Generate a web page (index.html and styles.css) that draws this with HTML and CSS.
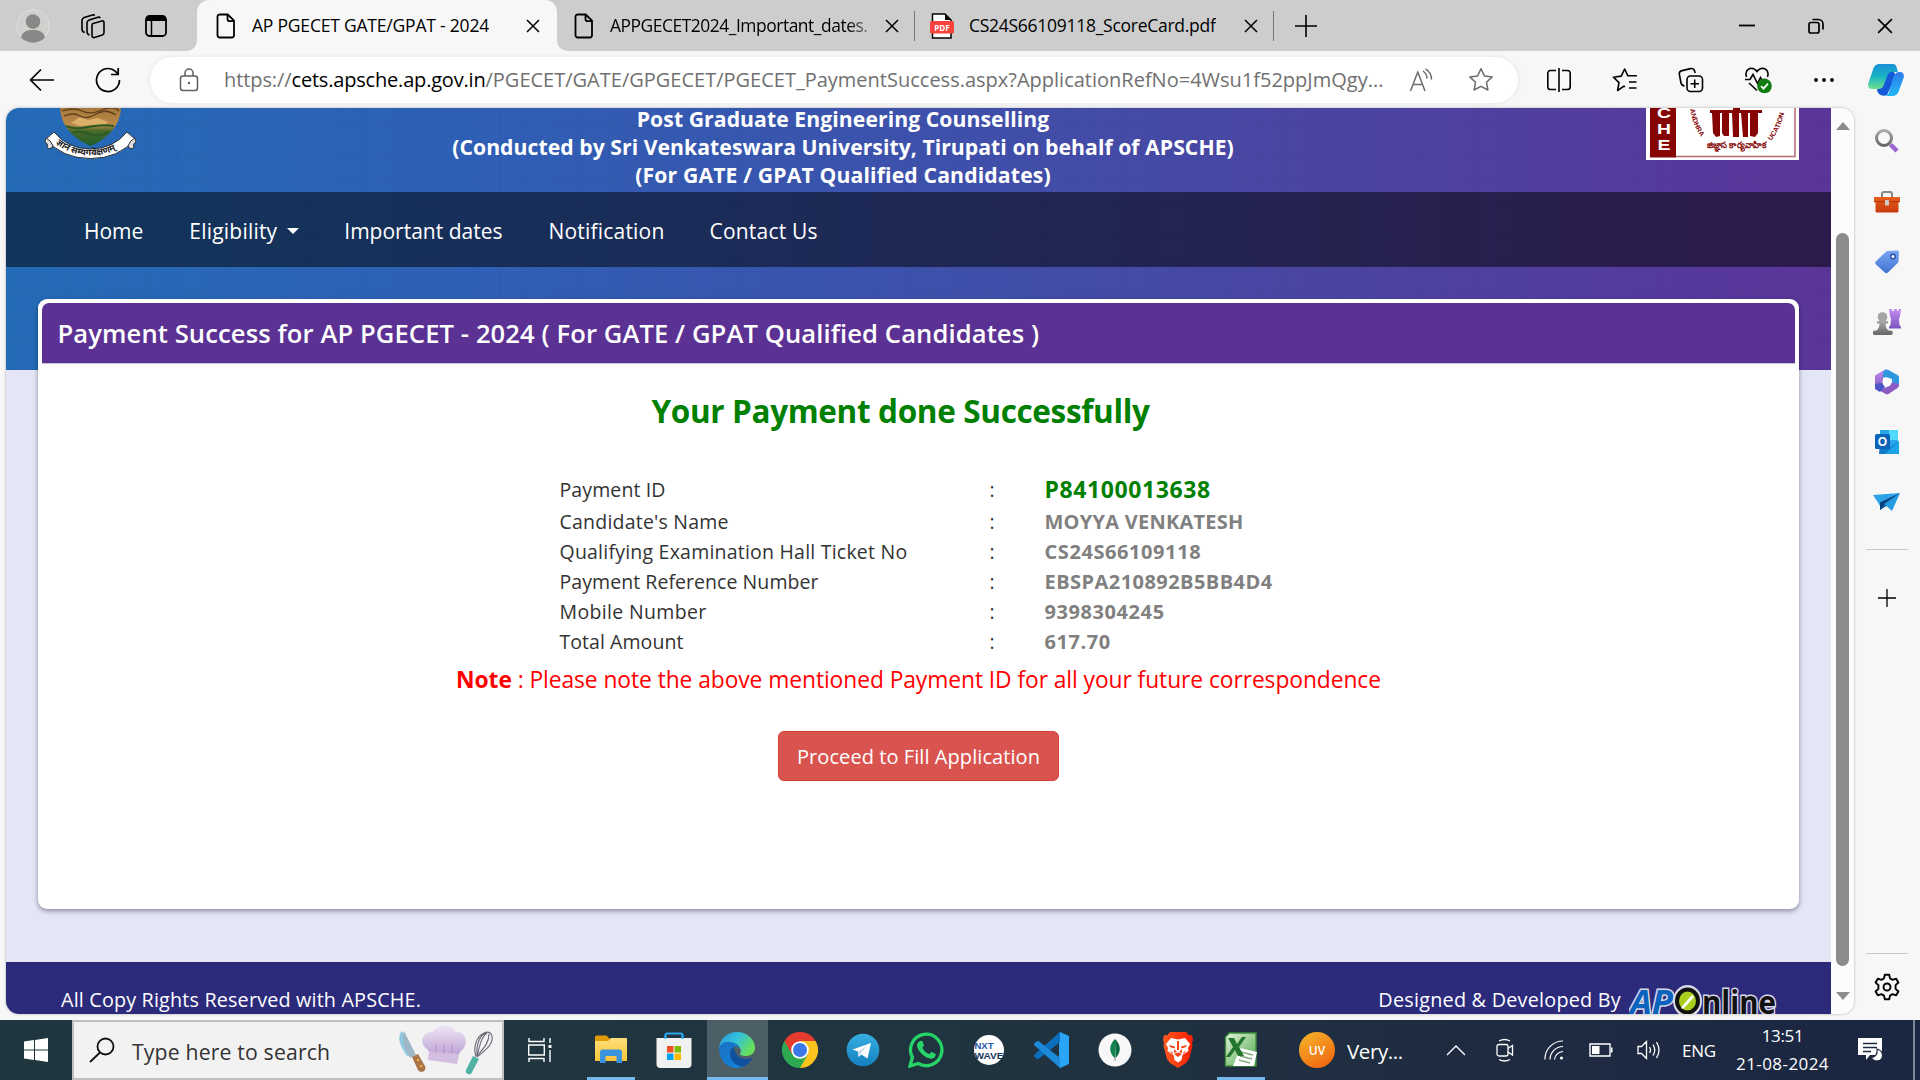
FILE: index.html
```html
<!DOCTYPE html>
<html lang="en">
<head>
<meta charset="utf-8">
<title>AP PGECET GATE/GPAT - 2024</title>
<link rel="stylesheet" href="styles.css">
</head>
<body>
<svg class="defs" width="0" height="0">
  <defs>
    <symbol id="page" viewBox="0 0 20 26"><path d="M3.5 1.5h8.2l6.3 6.2v14.6a2.2 2.2 0 0 1-2.2 2.2H3.700a2.200 2.200 0 0 1-2.200-2.200V3.700a2.200 2.200 0 0 1 2.200-2.200zM11.500 1.800V6a2.200 2.200 0 0 0 2.200 2.200h4" fill="none" stroke="#000" stroke-width="1.8"/></symbol>
    <symbol id="x" viewBox="0 0 14 14"><path d="M1 1l12 12M13 1L1 13" fill="none" stroke="#000" stroke-width="1.5"/></symbol>
    <symbol id="plus" viewBox="0 0 22 22"><path d="M11 0v22M0 11h22" fill="none" stroke="#000" stroke-width="1.6"/></symbol>
    <linearGradient id="cp1" x1="0" y1="0" x2="0" y2="1"><stop offset="0" stop-color="#1b8fd8"/><stop offset=".5" stop-color="#19b5c4"/><stop offset="1" stop-color="#6fe08c"/></linearGradient>
    <linearGradient id="cp2" x1="0" y1="0" x2="0" y2="1"><stop offset="0" stop-color="#2f7de9"/><stop offset="1" stop-color="#1fb6f5"/></linearGradient>
    <linearGradient id="pur" x1="0" y1="0" x2="0" y2="1"><stop offset="0" stop-color="#c58df0"/><stop offset="1" stop-color="#7a55c0"/></linearGradient>
    <linearGradient id="gry" x1="0" y1="0" x2="0" y2="1"><stop offset="0" stop-color="#a9a9a9"/><stop offset="1" stop-color="#666"/></linearGradient>
    <linearGradient id="org" x1="0" y1="0" x2="0" y2="1"><stop offset="0" stop-color="#e8601c"/><stop offset="1" stop-color="#c63a0c"/></linearGradient>
    <linearGradient id="blu" x1="0" y1="0" x2="0" y2="1"><stop offset="0" stop-color="#79a6f3"/><stop offset="1" stop-color="#4273d3"/></linearGradient>
    <linearGradient id="ed1" x1="0" y1="0" x2="1" y2=".5"><stop offset="0" stop-color="#2593dc"/><stop offset=".5" stop-color="#33c2dd"/><stop offset="1" stop-color="#66e05a"/></linearGradient>
    <linearGradient id="ed2" x1="0" y1="0" x2="1" y2="1"><stop offset="0" stop-color="#1c6fc4"/><stop offset="1" stop-color="#0f86dc"/></linearGradient>
    <linearGradient id="tg" x1="0" y1="0" x2="0" y2="1"><stop offset="0" stop-color="#37aee2"/><stop offset="1" stop-color="#1280c0"/></linearGradient>
    <linearGradient id="br" x1="0" y1="0" x2="1" y2="0"><stop offset="0" stop-color="#ff5a20"/><stop offset="1" stop-color="#fa1e05"/></linearGradient>
    <linearGradient id="fold" x1="0" y1="0" x2="0" y2="1"><stop offset="0" stop-color="#ffe07a"/><stop offset="1" stop-color="#f7c33a"/></linearGradient>
    <linearGradient id="xl" x1="0" y1="0" x2="1" y2="1"><stop offset="0" stop-color="#e4f3dc"/><stop offset="1" stop-color="#4fa84c"/></linearGradient>
    <linearGradient id="hat" x1="0" y1="0" x2="0" y2="1"><stop offset="0" stop-color="#efe7f6"/><stop offset="1" stop-color="#bfa3d3"/></linearGradient>
    <linearGradient id="shield" x1="0" y1="0" x2="0" y2="1"><stop offset="0" stop-color="#a8783a"/><stop offset=".45" stop-color="#b98a48"/><stop offset=".6" stop-color="#4a6a28"/><stop offset="1" stop-color="#1d5a26"/></linearGradient>
  </defs>
</svg>

<header class="tabstrip">
  <svg class="avatar" width="34" height="34" viewBox="0 0 34 34"><circle cx="17" cy="17" r="16.200" fill="#d2d0ce" stroke="#dededc"/><circle cx="17" cy="12.600" r="7.300" fill="#8a8886"/><path d="M5 28.500c1.500-6 6-7.500 12-7.500s10.500 1.500 12 7.500a16.500 16.500 0 0 1-24 0z" fill="#8a8886"/></svg>
  <svg class="workspaces" width="26" height="26" viewBox="0 0 26 26" fill="none" stroke="#000" stroke-width="1.600" stroke-linejoin="round"><path d="M13 10.500l9-2.500c1.200-.3 2 .3 2 1.500v10c0 1.200-.6 2-1.700 2.400l-7.800 2.600c-1.200.4-2.500-.3-2.500-1.700V12c0-.8.300-1.300 1-1.500z"/><path d="M9.500 22C7.700 21.500 7 20.500 7 18.500V10c0-1.500.8-2.500 2.200-3L18 4.300c1-.3 1.800 0 2.300.8M4.700 19.500C3 19 2 18 2 16V7.600c0-1.500.8-2.500 2.200-3L12.500 2c1-.3 1.800 0 2.300.6"/></svg>
  <svg class="tabmenu" width="22" height="22" viewBox="0 0 22 22"><rect x="1" y="1" width="20" height="20" rx="3.500" fill="none" stroke="#000" stroke-width="1.800"/><path d="M1 6V4a3 3 0 0 1 3-3h14a3 3 0 0 1 3 3v2z"/><path d="M6.500 6v15" stroke="#000" stroke-width="1.500"/></svg>
  <div class="tab active">
    <svg width="20" height="26"><use href="#page"/></svg>
    <span class="tab-title t1">AP PGECET GATE/GPAT - 2024</span>
    <svg class="close" width="14" height="14"><use href="#x"/></svg>
  </div>
  <div class="tab second">
    <svg width="20" height="26"><use href="#page"/></svg>
    <span class="tab-title t2">APPGECET2024_Important_dates.</span>
    <svg class="close" width="14" height="14"><use href="#x"/></svg>
  </div>
  <div class="tab third">
    <svg width="24" height="26" viewBox="0 0 24 26"><path d="M2.500 1h12.500l6 6v18H2.500z" fill="#fff" stroke="#000" stroke-width="1.500"/><path d="M15 1l6 6h-6z"/><rect x="0" y="8" width="24" height="12.500" rx="1.500" fill="#f4433c"/><text x="12" y="17.600" text-anchor="middle" class="pdf">PDF</text></svg>
    <span class="tab-title t3">CS24S66109118_ScoreCard.pdf</span>
    <svg class="close" width="14" height="14"><use href="#x"/></svg>
  </div>
  <svg class="newtab" width="22" height="22"><use href="#plus"/></svg>
  <div class="winbtns">
    <svg width="16" height="16" viewBox="0 0 16 16"><path d="M0 7.500h16" stroke="#000" stroke-width="1.800"/></svg>
    <svg width="16" height="16" viewBox="0 0 16 16" fill="none" stroke="#000" stroke-width="1.700"><rect x="1" y="4.500" width="10" height="10.500" rx="2"/><path d="M4.500 1.500h6A4.500 4.500 0 0 1 15 6v5.500"/></svg>
    <svg width="16" height="16" viewBox="0 0 14 14"><use href="#x"/></svg>
  </div>
</header>

<div class="toolbar">
  <svg class="back" width="26" height="24" viewBox="0 0 26 24" fill="none" stroke="#000" stroke-width="1.700"><path d="M25 12H1.500M12 1.500L1.500 12 12 22.500"/></svg>
  <svg class="reload" width="26" height="26" viewBox="0 0 26 26" fill="none" stroke="#000" stroke-width="1.700"><path d="M24.500 13A11.500 11.500 0 1 1 20.500 4.300L23 7"/><path d="M23.200 1v6.500H16"/></svg>
  <div class="address">
    <svg class="lock" width="20" height="24" viewBox="0 0 20 24" fill="none" stroke="#5f5f5f" stroke-width="1.500"><rect x="1.500" y="8" width="17" height="14.500" rx="2.500"/><path d="M6 8V5a4 4 0 0 1 8 0v3"/><circle cx="10" cy="15" r="1.200" fill="#5f5f5f" stroke="none"/></svg>
    <span class="url"><span class="scheme">https://</span><span class="host">cets.apsche.ap.gov.in</span><span class="path">/PGECET/GATE/GPGECET/PGECET_PaymentSuccess.aspx?ApplicationRefNo=4Wsu1f52ppJmQgy...</span></span>
    <svg class="aloud" width="26" height="24" viewBox="0 0 26 24" fill="none" stroke="#6b6b6b" stroke-width="1.500"><path d="M1.500 23L8.800 4 16 23M4 16.500h9.600M14 3c2.600 1.800 4 4.400 4 7.500M16.500 .8c4 2.400 6 6 6 10.700"/></svg>
    <svg class="star" width="26" height="26" viewBox="0 0 26 26" fill="none" stroke="#6b6b6b" stroke-width="1.500" stroke-linejoin="round"><path d="M13 1.800l3.400 7.100 7.800 1-5.700 5.400 1.400 7.700L13 19.300 6.100 23l1.400-7.700L1.800 9.900l7.800-1z"/></svg>
  </div>
  <div class="tools">
    <svg width="26" height="26" viewBox="0 0 26 26" fill="none" stroke="#000" stroke-width="1.600"><path d="M10 3.500H4.500a2.700 2.700 0 0 0-2.700 2.700v13.600a2.700 2.700 0 0 0 2.700 2.700H10M16 3.500h5.500a2.700 2.700 0 0 1 2.700 2.700v13.600a2.700 2.700 0 0 1-2.700 2.700H16M13 1v24"/></svg>
    <svg width="26" height="26" viewBox="0 0 26 26" fill="none" stroke="#000" stroke-width="1.600" stroke-linejoin="round"><path d="M13 19.800l-1-.6-6.400 4.300L7 15.600 1.400 10.200l7.800-1.100L12.600 2l3.300 6.800h9M17 15h7.500M17 21h7.500"/></svg>
    <svg width="26" height="26" viewBox="0 0 26 26" fill="none" stroke="#000" stroke-width="1.600"><rect x="9" y="9" width="15.500" height="15.500" rx="3.500"/><path d="M16.700 12.500v8.500M12.500 16.700H21M6.500 19C4 18.500 3.300 17.500 3 16L1.400 7.500C1 5.300 2 4 4 3.600l8.500-2c2-.4 3.700.4 4.300 2.900l.4 1.500"/></svg>
    <svg width="29" height="28" viewBox="0 0 29 28" fill="none" stroke="#000" stroke-width="1.600"><path d="M2.500 11C.8 7 3 2.500 7.300 2.300c2.700 0 4.500 1.500 5.700 3.300 1.200-1.800 3-3.300 5.700-3.300 4.300.2 6.500 4.700 4.800 8.700M1 13.500h5l3-5 4.500 9 3-6 1 2H23M5 17l8 7.500"/><circle cx="20.500" cy="20" r="7.300" fill="#107c10" stroke="none"/><path d="M17 20l2.500 2.600 4.500-5" stroke="#fff" stroke-width="1.800"/></svg>
    <svg width="22" height="6" viewBox="0 0 22 6"><circle cx="3" cy="3" r="1.900"/><circle cx="11" cy="3" r="1.900"/><circle cx="19" cy="3" r="1.900"/></svg>
  </div>
  <svg class="copilot" width="36" height="34" viewBox="0 0 36 34"><path d="M9 27l5-20h11l3 6-9 19c-5 2-9-.5-10-5z" fill="#1659d6"/><path d="M12 1h13c2 0 3 1 3.500 3l1.500 5h-6c-3 0-4 1.500-5 4.500l-3 8c-1 3-3 4.500-6 4.500H4c-3.500 0-4.500-3-3.600-6L5 6.500C6.200 2.500 8.500 1 12 1z" fill="url(#cp1)"/><path d="M24 33h-7c2.500-.5 3.500-2 4.500-5L25 15c1-3 3-6 6-6h1c3.500 0 4.500 3 3.600 6L31 27.500C29.800 31.500 27.500 33 24 33z" fill="url(#cp2)"/></svg>
</div>

<main class="main">
  <div class="viewport">
    <div class="page">
      <div class="hero">
        <svg class="emblem" width="94" height="52" viewBox="0 0 94 52"><path d="M16 0h61c-1 17-12 30-30.500 38C28 30 17 17 16 0z" fill="url(#shield)"/><path d="M18 3q12-4 20 0t20-1 17 1M20 8q10-4 16 0t16-2 20 1" fill="none" stroke="#5e3f1c" stroke-width="1.300"/><path d="M27 15l9-6 8 3 10-2 10 4-4 4-12-1-12 1z" fill="#dcb068"/><path d="M22 18q9 4 22 1t26-1M28 25q8-3 17 1t20-2" fill="none" stroke="#2b5a24" stroke-width="2"/><path d="M10 24q14 17 36.500 17T83 24l8 7q-16 19.500-44.500 19.500T2 31z" fill="#fff" stroke="#333" stroke-width="1"/><path d="M2 30q5 2 7 8-3 5-6 1 2-3-2-5zM91 30q-5 2-7 8 3 5 6 1-2-3 2-5z" fill="#ddd" stroke="#333"/><path id="rib" d="M9 32.500q15 15 37.500 15T85 32" fill="none"/><text class="ribbon"><textPath href="#rib" startOffset="4">ज्ञानं सम्यगवेक्षणम्</textPath></text></svg>
        <div class="headline">
          <div class="h1a">Post Graduate Engineering Counselling</div>
          <div class="h1b">(Conducted by Sri Venkateswara University, Tirupati on behalf of APSCHE)</div>
          <div class="h1c">(For GATE / GPAT Qualified Candidates)</div>
        </div>
        <svg class="apsche" width="153" height="52" viewBox="0 0 153 52"><path fill="#fff" d="M0 0h153v52H0z"/><path d="M29 0v48.500h120V0" fill="none" stroke="#b56a6a" stroke-width="1.500"/><path d="M4 0h26v49.500H4z" fill="#850505"/><g class="che"><text x="18" y="10" textLength="14" lengthAdjust="spacingAndGlyphs">C</text><text x="18" y="26" textLength="14" lengthAdjust="spacingAndGlyphs">H</text><text x="18" y="42" textLength="13" lengthAdjust="spacingAndGlyphs">E</text></g><path d="M64 2h52v3H64zM66 5h8v23l-4 1-3-4zM76 5h7v23h-5l-2-3zM86 5h7v24h-6zM95 5h7v24h-5zM104 5h8v20l-3 4-5-1zM87 0h7v5h-7z" fill="#850505"/><path id="arcl" d="M44 0q2 18 14 33" fill="none"/><path id="arcr" d="M125 33q11-13 14-33" fill="none"/><text class="arc"><textPath href="#arcl" startOffset="1">ANDHRA</textPath></text><text class="arc"><textPath href="#arcr">UCATION</textPath></text><text x="90.500" y="40" text-anchor="middle" class="telugu" textLength="60" lengthAdjust="spacingAndGlyphs">జిజ్ఞాస కార్యవాహిక</text></svg>
      </div>
      <nav class="nav">
        <span class="n1">Home</span>
        <span class="n2">Eligibility</span><i class="caret"></i>
        <span class="n3">Important dates</span>
        <span class="n4">Notification</span>
        <span class="n5">Contact Us</span>
      </nav>
      <section class="card">
        <h1 class="card-title">Payment Success for AP PGECET - 2024 ( For GATE / GPAT Qualified Candidates )</h1>
        <h2 class="success">Your Payment done Successfully</h2>
        <div class="details">
          <span class="d1">Payment ID</span><span>:</span><b class="pid">P84100013638</b>
          <span class="d2">Candidate's Name</span><span>:</span><b class="v2">MOYYA VENKATESH</b>
          <span class="d3">Qualifying Examination Hall Ticket No</span><span>:</span><b>CS24S66109118</b>
          <span class="d4">Payment Reference Number</span><span>:</span><b class="v4">EBSPA210892B5BB4D4</b>
          <span class="d5">Mobile Number</span><span>:</span><b>9398304245</b>
          <span class="d6">Total Amount</span><span>:</span><b>617.70</b>
        </div>
        <p class="note"><b>Note</b> : Please note the above mentioned Payment ID for all your future correspondence</p>
        <button class="proceed">Proceed to Fill Application</button>
      </section>
      <footer class="footer">
        <span class="f1">All Copy Rights Reserved with APSCHE.</span>
        <span class="f2">Designed &amp; Developed By</span>
        <svg class="apo" width="148" height="34" viewBox="0 0 148 34"><g class="apo-t"><text x="1" y="33" class="ap" textLength="43" lengthAdjust="spacingAndGlyphs">AP</text><text x="73" y="33" class="nl" textLength="74" lengthAdjust="spacingAndGlyphs">nline</text></g><ellipse cx="58.500" cy="20" rx="11" ry="12.500" fill="#b9dc2e" stroke="#d9d9e8" stroke-width="7"/><ellipse cx="58.500" cy="20" rx="10.500" ry="11.500" fill="#a9cf1e" stroke="#111" stroke-width="4"/><path d="M52 27l3-4 8-9 2 2-8 9-3 3z" fill="#fff"/></svg>
      </footer>
    </div>
    <div class="scroll"><i class="up"></i><i class="thumb"></i><i class="down"></i></div>
  </div>
  <aside class="side">
    <svg width="28" height="28" viewBox="0 0 28 28"><circle cx="11" cy="10" r="7.500" fill="none" stroke="url(#gry)" stroke-width="3"/><path d="M17.500 16.500l6.500 6.500" stroke="#9a66cf" stroke-width="4.500"/></svg>
    <svg width="28" height="28" viewBox="0 0 28 28"><path d="M9 9V6a2 2 0 0 1 2-2h6a2 2 0 0 1 2 2v3" fill="none" stroke="#888" stroke-width="2"/><path d="M1 9h26v4.500l-1.500 1V23a1.500 1.500 0 0 1-1.500 1.500H4A1.500 1.500 0 0 1 2.500 23v-8.500L1 13.500z" fill="url(#org)"/><path d="M1 13.700h26" stroke="#a62e08"/><rect x="12" y="12" width="4" height="5.500" rx="1" fill="#ccc"/></svg>
    <svg width="28" height="28" viewBox="0 0 28 28"><path d="M15 3l9-.5a1.800 1.800 0 0 1 2 2l-.5 8.500c0 1-.4 1.700-1 2.300L15 24.500c-1.200 1-2.300 1-3.300 0L3 16.500c-1-1.200-1-2.200 0-3.300L12.700 4c.7-.6 1.400-.9 2.300-1z" fill="url(#blu)"/><circle cx="20" cy="8.500" r="2.300" fill="#fff" stroke="#2a4ea5" stroke-width="1.500"/></svg>
    <svg width="28" height="28" viewBox="0 0 28 28"><path d="M16 1h3v2h2V1h3v2h1.500V1H28l-1 7-1 3 .5 6 1.500 2v1.500H16V19l1.500-2 .5-6-1-3z" fill="url(#pur)"/><circle cx="9.500" cy="9" r="4.800" fill="#a5a5a5"/><path d="M4 13h11v2.500h-2.500c0 3 .8 5 3 7h1.500a2 2 0 0 1 1 4.500H2a2 2 0 0 1 0-4.500h1.500c2.200-2 3-4 3-7H4z" fill="url(#gry)"/></svg>
    <svg width="28" height="28" viewBox="0 0 28 28"><path d="M13 1L3.500 6.500C2.500 7 2 8 2 9v11l8 3V10l6-3.500z" fill="url(#pur)"/><path d="M12 2c1-.7 2.500-.7 3.500 0l9 5c1 .6 1.500 1.500 1.500 2.600V18l-7-3.500V11L10 9V4z" fill="#3196e0"/><path d="M26 16c0 1.500 0 3-1.500 4l-9 6c-1 .6-2 .6-3 0L6 22l8-3 5-4.500z" fill="#8c5cc4"/><path d="M2 16v4c0 1 .4 1.500 1.500 2L7 24l5-5-3-4z" fill="#4b55c8"/><circle cx="14" cy="14" r="4.500" fill="#fff"/></svg>
    <svg width="28" height="28" viewBox="0 0 28 28"><path d="M7 2h18v24H7z" fill="#2aa5ea"/><path d="M16 2h9v10h-9z" fill="#50d9ff"/><path d="M7 14l9.500 6L26 13v13H6z" fill="#127ac9"/><path d="M26 13v13H12z" fill="#1da3e8"/><rect x="2" y="6" width="15" height="15" rx="1.500" fill="#0a63b8"/><text x="9.500" y="18" text-anchor="middle" class="ol">O</text></svg>
    <svg width="28" height="28" viewBox="0 0 28 28"><path d="M0 7l27-2-12 10-8 3-3-5z" fill="#2ba3e6"/><path d="M7 22V14.500L27 5l-14 13z" fill="#0a3f7e"/><path d="M27 5l-8 18-8-7z" fill="#249be0"/><path d="M7 22l4-6 2 2z" fill="#125ea8"/></svg>
    <i class="rule"></i>
    <svg class="add" width="18" height="18" viewBox="0 0 22 22"><use href="#plus"/></svg>
    <i class="rule low"></i>
    <svg class="gear" width="28" height="28" viewBox="0 0 28 28" fill="none" stroke="#000" stroke-width="1.900" stroke-linejoin="round"><path d="M11.800 1.700h4.400l.8 3.700 2.600 1.500 3.600-1.200 2.200 3.800-2.800 2.600v3.800l2.800 2.600-2.200 3.800-3.600-1.200L17 22.600l-.8 3.700h-4.400l-.8-3.700-2.600-1.500-3.600 1.200-2.200-3.800 2.800-2.600v-3.800L2.600 9.500l2.200-3.800 3.600 1.200L11 5.400z"/><circle cx="14" cy="14" r="3.500"/></svg>
  </aside>
</main>

<div class="taskbar">
  <svg class="start" width="24" height="24" viewBox="0 0 24 24" fill="#fff"><path d="M0 3.500l10-1.400v9.300H0zM11 2l13-2v11.400H11zM0 12.500h10v9.400L0 20.500zM11 12.500h13V24l-13-2z"/></svg>
  <div class="search">
    <svg width="26" height="26" viewBox="0 0 26 26" fill="none" stroke="#111" stroke-width="1.800"><circle cx="16.500" cy="9.500" r="8"/><path d="M11 15.500L1 25"/></svg>
    <span class="s1">Type here to search</span>
    <svg class="chef" width="98" height="52" viewBox="0 0 98 52"><path d="M4 7c-5 5-3 14 5 25l7-2z" fill="#8ecbe0"/><path d="M6 7l12 24-6 3C6 25 3 15 6 7z" fill="#9fb6c4"/><path d="M14 33l6-3 7 12c2 5-4 8-7 4z" fill="#a9744a"/><circle cx="20" cy="36" r="1.300" fill="#f0b43c"/><circle cx="23" cy="42" r="1.300" fill="#f0b43c"/><path d="M30 26c-10-6-6-19 5-18 5-9 18-9 23 0 11-1 13 13 5 19l-3 4H32z" fill="url(#hat)"/><path d="M31 27l30 3-2 10-29-4z" fill="#d3bee2"/><path d="M38 20v9M46 20v10M54 20v9" stroke="#b193c8"/><g fill="none" stroke="#6d6878" stroke-width="1.100"><path d="M78 33c-3-10 0-20 8-24 7-3 10 3 7 10-3 6-8 9-14 14M79 32C82 20 84 12 89 9M79 32c8-9 12-14 12-22M79 32C78 20 82 11 88 9"/></g><path d="M75 32l6 3-8 15c-3 1-6-1-5-4z" fill="#4fb2a2"/></svg>
  </div>
  <svg class="tview" width="24" height="24" viewBox="0 0 24 24" fill="none" stroke="#fff" stroke-width="1.400"><path d="M1 0v3.500h15V0M1 24v-3.500h15V24M.7 7h15.600v10H.7zM22 0v5M22 12v12"/><path d="M20.500 7h3v3h-3z" fill="#fff" stroke="none"/></svg>
  <div class="apps">
    <span class="app line"><svg width="36" height="36" viewBox="0 0 36 36"><path d="M2 6.500V5a1.500 1.500 0 0 1 1.500-1.500h10L17 7v4H2z" fill="#e09a06"/><path d="M2 9h13l3-3h15a1 1 0 0 1 1 1v22H2z" fill="url(#fold)"/><path d="M7 31V20a2.500 2.500 0 0 1 2.500-2.500h17A2.500 2.500 0 0 1 29 20v11h-5.500v-7h-11v7z" fill="#3a93dc"/></svg></span>
    <span class="app"><svg width="36" height="36" viewBox="0 0 36 36"><path d="M9.500 9V3a1.500 1.500 0 0 1 1.500-1.500h14A1.500 1.500 0 0 1 26.500 3v6" fill="none" stroke="#2ba6ee" stroke-width="2"/><path d="M.5 6h35v26a4 4 0 0 1-4 4h-27a4 4 0 0 1-4-4z" fill="#f1f1f1"/><path d="M9.500 7V3M26.500 7V3" stroke="#2ba6ee" stroke-width="2"/><path d="M11 14h6.500v6.500H11z" fill="#f25022"/><path d="M18.500 14H25v6.500h-6.500z" fill="#7fba00"/><path d="M11 21.500h6.500V28H11z" fill="#00a4ef"/><path d="M18.500 21.500H25V28h-6.500z" fill="#ffb900"/></svg></span>
    <span class="app sel"><svg width="36" height="36" viewBox="0 0 36 36"><path d="M0 16C1 6 9 0 18 0c10 0 18 7 18 16 0 5-4 8-9 8-4 0-6.500-1-6-2.500 2.500-3-.5-7.500-5-8C10 10 3 11 0 16z" fill="url(#ed1)"/><path d="M0 17c1-5 6-8 11-7 5 .5 9 2.500 10 6-4-3-10-1-10 5 0 8 7 13 14 13-2.300 1.300-5 2-7 2C8 36 0 28 0 17z" fill="url(#ed2)"/><path d="M15 14.500c-3 2-4 4-4 7 0 7 6 13 13 13 4-1 8-5 9.500-9-3 1.500-7 2-10 1-5-1.500-8-5-8.500-12z" fill="#11509f"/></svg></span>
    <span class="app"><svg width="36" height="36" viewBox="0 0 36 36"><path d="M18 9h15.600A18 18 0 0 1 18 36z" fill="#fcc31e"/><path d="M18 18L2.400 9A18 18 0 0 0 18 36l7.800-13.500z" fill="#2da94f"/><path d="M2.400 9A18 18 0 0 1 33.600 9H18l-7.800 13.500z" fill="#e33b2e"/><circle cx="18" cy="18" r="8.800" fill="#fff"/><circle cx="18" cy="18" r="7" fill="#3b78e7"/></svg></span>
    <span class="app"><svg width="34" height="34" viewBox="0 0 34 34"><circle cx="17" cy="17" r="16.300" fill="url(#tg)"/><path d="M6.500 16.500L25 10l-3.500 15.500-6-4-3 2.500-.7-5.500z" fill="#fff"/><path d="M12 18.500l9.500-6-6 6.500-3 5z" fill="#c8daea"/></svg></span>
    <span class="app"><svg width="36" height="36" viewBox="0 0 36 36"><path d="M2 34l2.400-8.600A15.700 15.700 0 1 1 10.300 31.500z" fill="none" stroke="#25d366" stroke-width="3.300"/><path d="M12 9c1-.6 2-.4 2.500.6l1.500 3.500c.2 1-1.600 2.200-1.500 3 1.500 3 3.500 4.700 6.500 6 1 0 1.800-2.300 2.700-2.100l3.600 1.800c1.400.8-.5 4.200-2.800 4.800-5.500 1.500-15-6.500-15.500-13 0-1.900 1.400-4 3-4.600z" fill="#25d366"/></svg></span>
    <span class="app"><svg width="32" height="32" viewBox="0 0 32 32"><circle cx="16" cy="16" r="15" fill="#fff"/><text x="1.500" y="14.500" class="nxt" textLength="19" lengthAdjust="spacingAndGlyphs" fill="#2257a5">NXT</text><text x="1.500" y="25" class="nxt" textLength="29" lengthAdjust="spacingAndGlyphs" fill="#17355e">WAVE</text></svg></span>
    <span class="app"><svg width="36" height="36" viewBox="0 0 36 36"><path d="M26 0l9 4v28l-9 4-1-1V1z" fill="#2aa4f4"/><path d="M26 0v10L4 27.500 0 24.500v-1.500z" fill="#0b6fbd"/><path d="M26 36V26L4 8.500 0 11.500V13z" fill="#1c8ad8"/></svg></span>
    <span class="app"><svg width="34" height="34" viewBox="0 0 34 34"><circle cx="17" cy="17" r="16.500" fill="#f7f7f7"/><path d="M17 6c4 4 6.500 9 3.500 15-1 2-2 3-3 4z" fill="#0c6b45"/><path d="M17 6c-4 4-6.500 9-3.500 15 1 2 2 3 3.500 4z" fill="#12854f"/><path d="M17 24v4" stroke="#888"/></svg></span>
    <span class="app"><svg width="36" height="36" viewBox="0 0 36 36"><path d="M10 0h16l3 3.500 3-.5 1 5-1 3 .5 3-3.500 13-3 4-8 5-8-5-3-4-3.500-13 .5-3-1-3 1-5 3 .5z" fill="url(#br)"/><path d="M11 6l7 1.500L25 6l5 6-2 4 .5 3-6 4-1 5-3.500 2.500L14.500 28l-1-5-6-4 .5-3-2-4z" fill="#fff"/><path d="M9 13l6 1.500-.5 2L10 15zM27 13l-6 1.500.5 2L26 15zM14 22l4-1.500 4 1.500-4 3zM17 9h2v9h-2zM14 17l3 3-3 1zM22 17l-3 3 3 1zM10 18l3 3-1 1zM26 18l-3 3 1 1z" fill="#fb4215"/></svg></span>
    <span class="app line"><svg width="36" height="36" viewBox="0 0 36 36"><path d="M2.500 5l4-4H33v33H2.500z" fill="url(#xl)" stroke="#3c8f3b" stroke-width="1.400"/><path d="M17 16l17 4-3 14H10z" fill="#fff"/><path d="M18 20l12 3M17 24l12 3M16 28l11 3" stroke="#7fae7c" stroke-width="1.500"/><path d="M5 6h6l3 6 5-7h4l-7 10 5 9h-6l-3-6-5 7H3l7-10z" fill="#23742c"/></svg></span>
  </div>
  <div class="uv">UV</div>
  <span class="w1">Very...</span>
  <svg class="chev" width="20" height="12" viewBox="0 0 20 12" fill="none" stroke="#fff" stroke-width="1.400"><path d="M1 11l9-9 9 9"/></svg>
  <svg class="meet" width="18" height="24" viewBox="0 0 18 24" fill="none" stroke="#fff" stroke-width="1.300"><rect x="1" y="6.500" width="11" height="11.500" rx="2"/><path d="M12 10.500l4.500-3v9.500l-4.500-3M3 3q5.500-3 11 0M3 21.500q5.500 3 11 0"/></svg>
  <svg class="wifi" width="20" height="20" viewBox="0 0 20 20" fill="none" stroke="#fff" stroke-width="1.200"><path d="M1 19.500A18 18 0 0 1 19 1M6 19.500A13 13 0 0 1 19 6.500M10.500 19.500A9 9 0 0 1 19 11.500"/><circle cx="17.500" cy="18" r="1.600" fill="#fff" stroke="none"/></svg>
  <svg class="batt" width="24" height="14" viewBox="0 0 24 14"><path d="M1 1h20v12H1z" fill="none" stroke="#fff" stroke-width="1.400"/><path d="M3 3h7.500v8H3zM22 4.500h1.500v5H22z" fill="#fff"/></svg>
  <svg class="vol" width="24" height="20" viewBox="0 0 24 20" fill="none" stroke="#fff" stroke-width="1.300"><path d="M1 6.500h3.500L9.500 1.500v17l-5-5H1zM12.500 7q2 3 0 6M16 4.500q3.500 5.500 0 11M19.500 2q5 8 0 16"/></svg>
  <span class="lang">ENG</span>
  <div class="clock"><span class="c1">13:51</span><span class="c2">21-08-2024</span></div>
  <svg class="notif" width="26" height="26" viewBox="0 0 26 26"><path d="M0 1h24v17h-12l-4 5v-5H0z" fill="#fff"/><path d="M5 6.500h14M5 10.500h14M5 14.500h8" stroke="#1c2a40" stroke-width="1.400"/><path d="M19 12c1 5-2 8.500-6 8.500 3 5 11 4.500 11.500-1.500C24.700 16 22.500 13 19 12z" fill="#fff" stroke="#1c2a40" stroke-width="1.200"/></svg>
  <i class="peek"></i>
</div>
</body>
</html>
```

FILE: styles.css
```css
* { box-sizing: border-box; }
body { margin: 0; width: 1920px; height: 1080px; overflow: hidden; display: flex; flex-direction: column; background: #f7f7f7; font-family: "Open Sans", "Noto Sans", sans-serif; color: #000; }
svg { display: block; flex: none; }
span { white-space: nowrap; }
.defs { position: absolute; }

/* Tab strip */
.tabstrip { height: 51px; flex: none; display: flex; align-items: center; background: #cdcdcd; }
.avatar { margin-left: 16px; }
.workspaces { margin-left: 30px; }
.tabmenu { margin-left: 39px; }
.tab { height: 51px; display: flex; align-items: center; font-size: 17.5px; }
.tab-title { overflow: hidden; margin-left: 16px; line-height: 28px; padding-bottom: 1px; }
.t1 { letter-spacing: -.205px; }
.t2 { letter-spacing: -.45px; font-size: 17.4px; }
.t3 { letter-spacing: -.275px; }
.tab .close { margin-left: auto; }
.tab.active { position: relative; margin-left: 30px; width: 360px; padding: 0 17px 0 19px; background: #f7f7f7; border-radius: 12px 12px 0 0; }
.tab.active::before, .tab.active::after { content: ""; position: absolute; bottom: 0; width: 10px; height: 10px; }
.tab.active::before { left: -10px; background: radial-gradient(circle at 0 0, transparent 9.5px, #f7f7f7 10px); }
.tab.active::after { right: -10px; background: radial-gradient(circle at 100% 0, transparent 9.5px, #f7f7f7 10px); }
.tab.second, .tab.third { background: linear-gradient(#777, #777) right center / 1.5px 30px no-repeat; }
.tab.second { width: 358px; padding: 0 16px 0 17px; }
.tab.second .tab-title { width: 264px; -webkit-mask-image: linear-gradient(90deg, #000 90%, rgba(0,0,0,.2)); mask-image: linear-gradient(90deg, #000 90%, rgba(0,0,0,.2)); }
.tab.third { width: 359px; padding: 0 16px 0 15px; }
.tab.third .tab-title { margin-left: 15px; }
.pdf { font: 700 8px "Open Sans", sans-serif; fill: #fff; }
.newtab { margin-left: 21px; }
.winbtns { display: flex; gap: 53px; margin-left: auto; padding-right: 27px; }

/* Toolbar */
.toolbar { height: 57px; flex: none; display: flex; align-items: center; }
.back { margin-left: 29px; }
.reload { margin-left: 40px; }
.address { width: 1368px; height: 46px; margin-left: 29px; border-radius: 23px; background: #fff; box-shadow: 0 0 5px rgba(0,0,0,.08); display: flex; align-items: center; font-size: 20px; color: #707070; }
.lock { margin-left: 29px; }
.url { margin-left: 25px; width: 1160px; display: flex; }
.scheme { letter-spacing: -.09px; }
.host { color: #000; letter-spacing: -.19px; }
.aloud { margin-left: 25px; }
.star { margin-left: 33px; }
.tools { display: flex; align-items: center; gap: 40px; margin-left: 28px; }
.copilot { margin-left: 33px; }

/* Page */
.main { height: 912px; flex: none; display: flex; }
.viewport { width: 1848px; height: 906px; margin-left: 6px; border-radius: 13px; overflow: hidden; display: flex; box-shadow: 0 0 3px rgba(0,0,0,.3); }
.page { width: 1825px; height: 906px; overflow: hidden; background:
  repeating-linear-gradient(90deg, rgba(0,0,40,.04) 0 1px, transparent 1px 27px) 8px 0 / 100% 262px no-repeat,
  repeating-linear-gradient(0deg, rgba(0,0,40,.04) 0 1px, transparent 1px 27px) 0 0 / 100% 262px no-repeat,
  linear-gradient(90deg, #246bb7, #2f5fb5 26%, #3d51ab 50%, #4946a2 70%, #5a3598) 0 0 / 100% 262px no-repeat, #e4e6f5; }
.hero { height: 84px; display: flex; }
.emblem { margin-left: 38px; }
.ribbon { font: 700 9px "Noto Sans", sans-serif; fill: #222; }
.headline { width: 1410px; margin-top: -3px; text-align: center; color: #fff; font-weight: 700; font-size: 21.2px; line-height: 28px; }
.h1a { letter-spacing: .06px; }
.h1b { letter-spacing: .04px; }
.h1c { letter-spacing: .14px; }
.apsche { margin-left: 98px; }
.che { font: 700 15px "Liberation Sans", sans-serif; fill: #fff; text-anchor: middle; }
.arc { font: 700 7px "Liberation Sans", sans-serif; fill: #850505; }
.telugu { font: 700 9px "Noto Sans", sans-serif; fill: #850505; }
.nav { height: 75px; display: flex; align-items: center; padding: 2px 0 0 78px; background: rgba(0,0,0,.5); color: #fff; font-size: 21px; }
.n2, .n4 { margin-left: 46px; }
.n3, .n5 { margin-left: 45px; }
.n2, .n4, .n5 { letter-spacing: .2px; }
.caret { margin-left: 10px; border: 6px solid transparent; border-top-color: #fff; border-bottom: 0; }
.card { width: 1761px; height: 610px; margin: 32px 0 0 32px; padding: 4px; background: #fff; border-radius: 9px; box-shadow: 0 2px 5px rgba(0,0,30,.4); display: flex; flex-direction: column; align-items: center; }
.card-title { align-self: stretch; height: 61px; margin: 0; padding-left: 15.5px; background: #5b3293; border-bottom: 1px solid #c9c0d8; border-radius: 7px 7px 0 0; color: #fff; font-size: 25.6px; font-weight: 600; line-height: 62px; letter-spacing: .09px; white-space: nowrap; }
.success { margin: 25px 36px 0 0; font-size: 31.5px; line-height: 44px; font-weight: 700; letter-spacing: -.35px; color: green; }
.details { width: 760px; margin: 39px 0 0 42px; display: grid; grid-template-columns: 430px 55px 1fr; grid-auto-rows: 30px; grid-template-rows: 35px; align-items: center; font-size: 19.5px; line-height: 30px; color: #333; }
.details b { color: #808080; font-size: 20px; letter-spacing: .58px; }
.details .v2 { letter-spacing: .25px; }
.details .v4 { letter-spacing: .45px; }
.details .pid { color: green; font-size: 23px; letter-spacing: .6px; padding-bottom: 1px; }
.d1 { letter-spacing: .11px; }
.d2, .d3 { letter-spacing: .22px; }
.d4, .d6 { letter-spacing: .06px; }
.d5 { letter-spacing: .34px; }
.note { margin: 6px 0 0; font-size: 22.8px; line-height: 34px; letter-spacing: -.07px; color: red; }
.proceed { margin: 34px 0 0; width: 281px; height: 50px; padding: 1px 0 0; border: 1px solid #d43f3a; border-radius: 6px; background: #d9534f; color: #fff; font: 20px "Open Sans", sans-serif; letter-spacing: .07px; }
.footer { height: 53px; margin-top: 53px; padding-left: 55px; background: #2c2a7b; color: #fff; font-size: 19.8px; display: flex; align-items: flex-start; }
.footer span { line-height: 28px; margin-top: 24px; }
.f1 { letter-spacing: .16px; }
.f2 { margin-left: auto; letter-spacing: .24px; }
.apo { margin: 19px 54px 0 8px; }
.apo-t { stroke: #d9d9e8; stroke-width: 3px; paint-order: stroke; font-family: "Open Sans", sans-serif; font-weight: 700; }
.ap { font-size: 34px; fill: #0b63bd; font-style: italic; }
.nl { font-size: 33px; fill: #111; }

/* Scrollbar */
.scroll { width: 23px; background: #fcfcfc; display: flex; flex-direction: column; align-items: center; }
.scroll i { display: block; }
.up { margin-top: 14px; border: 7.5px solid transparent; border-bottom: 8px solid #8b8b8b; border-top: 0; }
.thumb { width: 13px; height: 733px; margin-top: 103px; border-radius: 7px; background: #8b8b8b; }
.down { margin-top: 26px; border: 7.5px solid transparent; border-top: 8px solid #8b8b8b; border-bottom: 0; }

/* Sidebar */
.side { width: 66px; display: flex; flex-direction: column; align-items: center; padding-top: 20px; gap: 32px; }
.rule { width: 42px; height: 1px; background: #c8c8c8; margin-top: 1px; }
.add { margin-top: 7px; }
.rule.low { margin-top: 314px; }
.gear { margin-top: -13px; }

/* Taskbar */
.taskbar { height: 60px; flex: none; display: flex; align-items: center; background: linear-gradient(90deg, #20363f, #20343f 50%, #1f2e40 68%, #1b2642); color: #fff; }
.start { margin-left: 24px; }
.search { width: 432px; height: 60px; margin-left: 24px; border: 2px solid #bfbfbf; background: #f2f2f2; display: flex; align-items: center; color: #333; font-size: 21.2px; }
.search > svg:first-child { margin-left: 15px; }
.s1 { margin-left: 17px; padding-top: 2px; letter-spacing: .17px; }
.chef { margin-left: auto; margin-right: 6px; }
.tview { margin-left: 24px; }
.apps { display: flex; margin-left: 27px; }
.app { width: 63px; height: 60px; display: flex; align-items: center; justify-content: center; }
.app.line { background: linear-gradient(#76b9ed, #76b9ed) center bottom / 48px 3px no-repeat; }
.app.sel { background: linear-gradient(#76b9ed, #76b9ed) 2px bottom / 61px 3px no-repeat, linear-gradient(#4c5e66, #4c5e66) 2px 0 / 61px 100% no-repeat; }
.nxt { font: 700 9px "Liberation Sans", sans-serif; }
.ol { font: 700 12px "Liberation Sans", sans-serif; fill: #fff; }
.uv { width: 36px; height: 36px; margin-left: 27px; border-radius: 50%; background: linear-gradient(150deg, #f6b72a, #ef5f0e); font-size: 12px; font-weight: 600; display: flex; align-items: center; justify-content: center; }
.w1 { margin-left: 12px; padding-top: 2px; width: 55px; font-size: 20.5px; letter-spacing: -.4px; }
.chev { margin-left: 44px; }
.meet { margin-left: 30px; }
.wifi { margin-left: 30px; }
.batt { margin-left: 25px; }
.vol { margin-left: 24px; }
.lang { margin-left: 21px; width: 35px; font-size: 17px; letter-spacing: -.2px; }
.clock { width: 93px; margin-left: 19px; display: flex; flex-direction: column; align-items: center; font-size: 17px; line-height: 28px; }
.c1 { letter-spacing: -.35px; }
.c2 { letter-spacing: .43px; }
.notif { margin-left: 29px; }
.peek { width: 1.5px; height: 60px; margin-left: 29px; background: #7b8494; }
```
